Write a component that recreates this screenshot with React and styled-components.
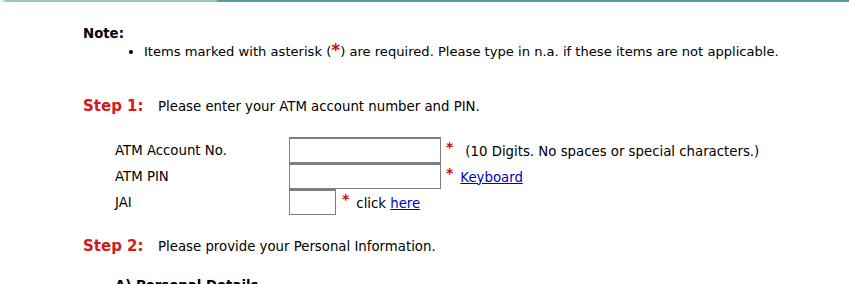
import React from "react";
import styled, { createGlobalStyle } from "styled-components";

const Global = createGlobalStyle`
  html, body { margin: 0; padding: 0; background: #fff; }
  body { font-family: Verdana, "DejaVu Sans", sans-serif; font-size: 13.3px; color: #000; }
`;

const Page = styled.div`
  width: 849px;
  height: 284px;
  overflow: hidden;
`;

const TopRule = styled.div`
  height: 2px;
  background: linear-gradient(to right, #fff 0px, #8fcac6 6px, #8fcac6 216px, #5b9b9a 218px, #5b9b9a 100%);
`;

const Content = styled.div`
  padding: 24px 0 0 83px;
`;

const NoteTitle = styled.div`
  font-weight: bold;
  line-height: 16px;
`;

const BulletList = styled.ul`
  margin: 1px 0 0 0;
  padding-left: 61px;
  line-height: 17px;
  font-size: 13.1px;
  list-style: disc;
`;

const Req = styled.span`
  color: #e00000;
  font-weight: bold;
  font-size: 17px;
  line-height: 10px;
`;

const StepRow = styled.div`
  display: flex;
  align-items: baseline;
  margin-top: ${(p) => p.$mt}px;
`;

const StepLabel = styled.span`
  color: #d81818;
  font-weight: bold;
  font-size: 15px;
  width: 75px;
`;

const FormGrid = styled.div`
  display: grid;
  grid-template-columns: 174px auto;
  margin: 22px 0 0 32px;
`;

const Label = styled.div`
  display: flex;
  align-items: center;
  height: 26px;
`;

const FieldCell = styled.div`
  display: flex;
  align-items: center;
  height: 26px;
`;

const TextBox = styled.div`
  box-sizing: border-box;
  width: ${(p) => p.$w}px;
  height: 26px;
  border: 1px solid #7f7f7f;
  border-top-width: 2px;
  background: #fff;
  flex: none;
`;

const Star = styled.span`
  color: #e00000;
  font-size: 14px;
  font-weight: bold;
  margin-left: ${(p) => p.$ml}px;
  margin-right: ${(p) => p.$mr}px;
  position: relative;
  top: -3px;
`;

const Hint = styled.span`
  position: relative;
  top: 1px;
`;

const Link = styled.a`
  color: #0000cc;
  text-decoration: underline;
`;

const SubHeading = styled.div`
  font-weight: bold;
  margin: 23px 0 0 32px;
`;

export default function App() {
  return (
    <Page>
      <Global />
      <TopRule />
      <Content>
        <NoteTitle>Note:</NoteTitle>
        <BulletList>
          <li>
            Items marked with asterisk (<Req>*</Req>) are required. Please type in n.a. if these items are not applicable.
          </li>
        </BulletList>
        <StepRow $mt={37}>
          <StepLabel>Step 1:</StepLabel>
          <span>Please enter your ATM account number and PIN.</span>
        </StepRow>
        <FormGrid>
          <Label>ATM Account No.</Label>
          <FieldCell>
            <TextBox $w={152} />
            <Star $ml={5} $mr={12}>*</Star>
            <Hint>(10 Digits. No spaces or special characters.)</Hint>
          </FieldCell>
          <Label>ATM PIN</Label>
          <FieldCell>
            <TextBox $w={152} />
            <Star $ml={5} $mr={7}>*</Star>
            <Hint><Link href="#">Keyboard</Link></Hint>
          </FieldCell>
          <Label>JAI</Label>
          <FieldCell>
            <TextBox $w={47} />
            <Star $ml={6} $mr={7}>*</Star>
            <Hint>click <Link href="#">here</Link></Hint>
          </FieldCell>
        </FormGrid>
        <StepRow $mt={22}>
          <StepLabel>Step 2:</StepLabel>
          <span>Please provide your Personal Information.</span>
        </StepRow>
        <SubHeading>A) Personal Details</SubHeading>
      </Content>
    </Page>
  );
}
